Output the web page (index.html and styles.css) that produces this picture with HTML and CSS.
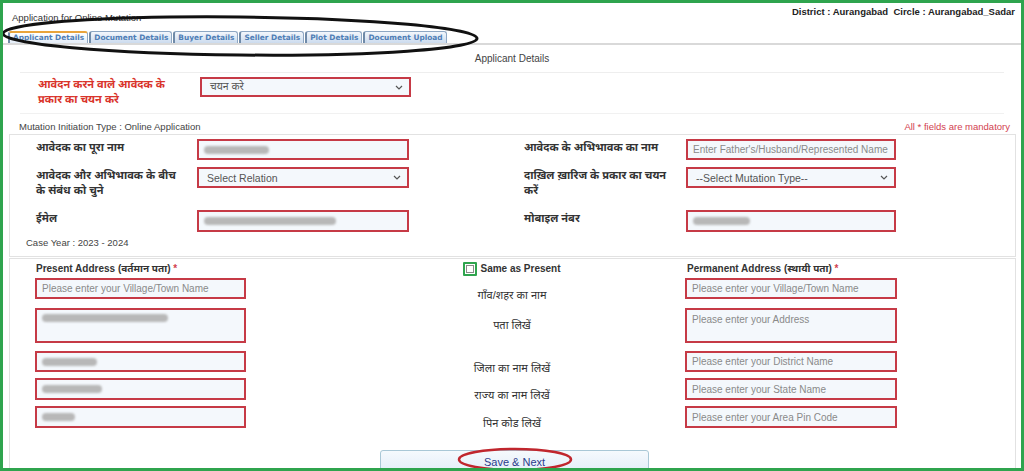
FILE: index.html
```html
<!DOCTYPE html>
<html lang="hi">
<head>
<meta charset="utf-8">
<title>Application for Online Mutation</title>
<link rel="stylesheet" href="styles.css">
</head>
<body>
<div class="page">
  <header class="top">
    <div class="app-title">Application for Online Mutation</div>
    <div class="loc">District : Aurangabad&nbsp; Circle : Aurangabad_Sadar</div>
  </header>

  <nav class="tabs">
    <span class="tab active">Applicant Details</span>
    <span class="tab">Document Details</span>
    <span class="tab">Buyer Details</span>
    <span class="tab">Seller Details</span>
    <span class="tab">Plot Details</span>
    <span class="tab">Document Upload</span>
  </nav>

  <main class="content">
    <h2 class="sec-title">Applicant Details</h2>

    <div class="type-row">
      <div class="type-label">आवेदन करने वाले आवेदक के<br>प्रकार का चयन करे</div>
      <div class="select type-select">
        <span class="sel-text">चयन करे</span>
        <svg class="chev" viewBox="0 0 8 5" width="8" height="5"><path d="M1 1 L4 4 L7 1" fill="none" stroke="#555" stroke-width="1.2"/></svg>
      </div>
    </div>

    <div class="meta-row">
      <span>Mutation Initiation Type : Online Application</span>
      <span class="mand">All * fields are mandatory</span>
    </div>

    <section class="panel panel-one">
      <div class="grid-one">
        <div class="lbl">आवेदक का पूरा नाम</div>
        <div class="field"><span class="blur w65"></span></div>
        <div class="lbl rl">आवेदक के अभिभावक का नाम</div>
        <div class="field ph">Enter Father's/Husband/Represented Name</div>

        <div class="lbl">आवेदक और अभिभावक के बीच<br>के संबंध को चुने</div>
        <div class="select">
          <span class="sel-text">Select Relation</span>
          <svg class="chev" viewBox="0 0 8 5" width="8" height="5"><path d="M1 1 L4 4 L7 1" fill="none" stroke="#555" stroke-width="1.2"/></svg>
        </div>
        <div class="lbl rl">दाख़िल ख़ारिज के प्रकार का चयन<br>करें</div>
        <div class="select">
          <span class="sel-text">--Select Mutation Type--</span>
          <svg class="chev" viewBox="0 0 8 5" width="8" height="5"><path d="M1 1 L4 4 L7 1" fill="none" stroke="#555" stroke-width="1.2"/></svg>
        </div>

        <div class="lbl">ईमेल</div>
        <div class="field tall"><span class="blur w132"></span></div>
        <div class="lbl rl">मोबाइल नंबर</div>
        <div class="field tall"><span class="blur w57"></span></div>
      </div>
      <div class="case-year">Case Year : 2023 - 2024</div>
    </section>

    <section class="panel panel-two">
      <div class="grid-two">
        <div class="hd left">Present Address (वर्तमान पता) <span class="star">*</span></div>
        <div class="hd mid"><input type="checkbox" class="cb"><span>Same as Present</span></div>
        <div class="hd right">Permanent Address (स्थायी पता) <span class="star">*</span></div>

        <div class="cell left"><div class="field ph">Please enter your Village/Town Name</div></div>
        <div class="mlbl">गाँव/शहर का नाम</div>
        <div class="cell right"><div class="field ph">Please enter your Village/Town Name</div></div>

        <div class="cell left"><div class="field area"><span class="blur w126"></span></div></div>
        <div class="mlbl">पता लिखें</div>
        <div class="cell right"><div class="field area ph">Please enter your Address</div></div>

        <div class="cell left"><div class="field"><span class="blur w55"></span></div></div>
        <div class="mlbl">जिला का नाम लिखें</div>
        <div class="cell right"><div class="field ph">Please enter your District Name</div></div>

        <div class="cell left"><div class="field tall"><span class="blur w60"></span></div></div>
        <div class="mlbl">राज्य का नाम लिखें</div>
        <div class="cell right"><div class="field tall ph">Please enter your State Name</div></div>

        <div class="cell left"><div class="field tall"><span class="blur w33"></span></div></div>
        <div class="mlbl">पिन कोड लिखें</div>
        <div class="cell right"><div class="field tall ph">Please enter your Area Pin Code</div></div>
      </div>
      <button class="save" type="button">Save &amp; Next</button>
    </section>
  </main>

  <svg class="annot" viewBox="0 0 1024 471" width="1024" height="471">
    <ellipse cx="240" cy="36" rx="237" ry="19" transform="rotate(0.6 240 36)" fill="none" stroke="#111" stroke-width="3"/>
    <ellipse cx="515" cy="459.5" rx="56" ry="10.5" fill="none" stroke="#c0262d" stroke-width="2.5"/>
  </svg>
</div>
</body>
</html>
```

FILE: styles.css
```css
* { box-sizing: border-box; }

body {
  margin: 0;
  background: #fff;
  font-family: "Liberation Sans", Arial, "Noto Sans Devanagari", "Lohit Devanagari", "FreeSans", sans-serif;
  color: #333;
}

.page {
  position: relative;
  width: 1024px;
  height: 471px;
  border: 3px solid #2fa44e;
  overflow: hidden;
  background: #fff;
}

/* header */
.top {
  display: flex;
  justify-content: space-between;
  height: 28px;
}
.app-title {
  font-size: 9.5px;
  padding: 9px 0 0 9px;
  color: #333;
}
.loc {
  font-size: 9.5px;
  font-weight: bold;
  padding: 3px 6px 0 0;
  color: #222;
}

/* tabs */
.tabs {
  display: flex;
  align-items: flex-end;
  gap: 1px;
  height: 14px;
  padding-left: 5px;
  border-bottom: 2px solid #d9d9d9;
}
.tab {
  height: 12px;
  padding: 0 3px;
  font-family: "DejaVu Sans", Verdana, sans-serif;
  font-weight: bold;
  font-size: 7.4px;
  line-height: 11px;
  color: #4f7eb6;
  border: 1px solid #8ea7c3;
  border-left: 2px solid #6f8aa8;
  border-bottom: 0;
  border-radius: 3px 3px 0 0;
  background: linear-gradient(#f3f7fc, #ccdbee);
}
.tab.active {
  border-top: 2px solid #e9a43c;
  background: linear-gradient(#ffffff, #e4edf8);
  line-height: 10px;
}

/* section title */
.sec-title {
  margin: 0 17px;
  height: 28px;
  line-height: 28px;
  text-align: center;
  font-size: 10px;
  font-weight: normal;
  color: #444;
  border-bottom: 1px solid #eeeeee;
}

.type-row {
  display: flex;
  margin: 0 17px;
  height: 41px;
  padding: 4px 0 0 18px;
  border-bottom: 1px solid #f1f1f1;
}
.type-label {
  width: 162px;
  font-size: 11px;
  font-weight: bold;
  line-height: 15px;
  color: #d9342b;
}

/* select-like boxes */
.select {
  display: flex;
  align-items: center;
  justify-content: space-between;
  height: 21px;
  padding: 0 6px 0 8px;
  border: 2px solid #c63a46;
  background: #f4f8fc;
  font-size: 10.5px;
  color: #555;
}
.type-select {
  width: 211px;
  height: 20px;
}
.chev { flex: none; }

.meta-row {
  display: flex;
  justify-content: space-between;
  height: 20px;
  padding: 7px 11px 0 16px;
  font-size: 9.5px;
  line-height: 12px;
  color: #444;
}
.mand { color: #d2424f; }

/* panels */
.panel {
  margin: 0 5px 0 6px;
  border: 1px solid #e2e2e2;
}
.panel-one {
  padding: 4px 0 6px;
}
.grid-one {
  display: grid;
  grid-template-columns: 187px 212px 277px 210px;
  grid-template-rows: 28px 43px 26px;
}
.lbl {
  padding-left: 26px;
  padding-top: 1px;
  font-size: 11px;
  font-weight: bold;
  line-height: 15px;
  color: #333;
}
.lbl.rl { padding-left: 115px; }

.field {
  display: flex;
  align-items: center;
  height: 21px;
  padding-left: 5px;
  border: 2px solid #c63a46;
  background: #f4f8fc;
  font-size: 10px;
  color: #333;
}
.field.ph { color: #8a8a8a; }
.field.tall { height: 22px; }
.field.area {
  height: 35px;
  align-items: flex-start;
  padding-top: 4px;
}

.blur {
  display: inline-block;
  height: 8px;
  border-radius: 4px;
  background: #b8b8b8;
  filter: blur(1.2px);
}
.w65 { width: 65px; }
.w132 { width: 132px; }
.w57 { width: 57px; }
.w126 { width: 126px; }
.w55 { width: 55px; }
.w60 { width: 60px; }
.w33 { width: 33px; }

.case-year {
  padding-left: 16px;
  font-size: 9.5px;
  line-height: 14px;
  color: #444;
}

.panel-two {
  margin-top: 1px;
  height: 220px;
}
.grid-two {
  display: grid;
  grid-template-columns: 402px 200px 1fr;
  grid-template-rows: 19px 30px 43px 27px 28px 28px;
}
.hd {
  font-size: 10px;
  font-weight: bold;
  line-height: 19px;
  color: #333;
}
.hd.left { padding-left: 26px; }
.hd.right { padding-left: 75px; }
.hd.mid {
  display: flex;
  align-items: center;
  justify-content: center;
  gap: 3px;
}
.star { color: #d2424f; }

.cb {
  appearance: none;
  -webkit-appearance: none;
  margin: 0;
  width: 14px;
  height: 14px;
  border: 2px solid #2fa44e;
  background: #fff;
  box-shadow: inset 0 0 0 1px #fff, inset 0 0 0 2px #8a8a8a;
  border-radius: 1px;
}

.cell.left { padding-left: 25px; }
.cell.left .field { width: 211px; }
.cell.right { padding-left: 73px; }
.cell.right .field { width: 212px; }

.mlbl {
  text-align: center;
  font-size: 11px;
  line-height: 16px;
  padding-top: 9px;
  color: #333;
}

.save {
  display: block;
  width: 269px;
  height: 24px;
  margin: 16px 0 0 370px;
  padding: 0;
  font-family: "Liberation Sans", Arial, sans-serif;
  font-size: 11px;
  line-height: 22px;
  text-align: center;
  color: #2b3c8c;
  background: linear-gradient(#f5f9fd, #e3edf8);
  border: 1px solid #a9c7d6;
  border-radius: 3px;
}

/* hand-drawn annotation ellipses lying over the page */
.annot {
  position: absolute;
  left: -3px;
  top: -3px;
  pointer-events: none;
}
```
